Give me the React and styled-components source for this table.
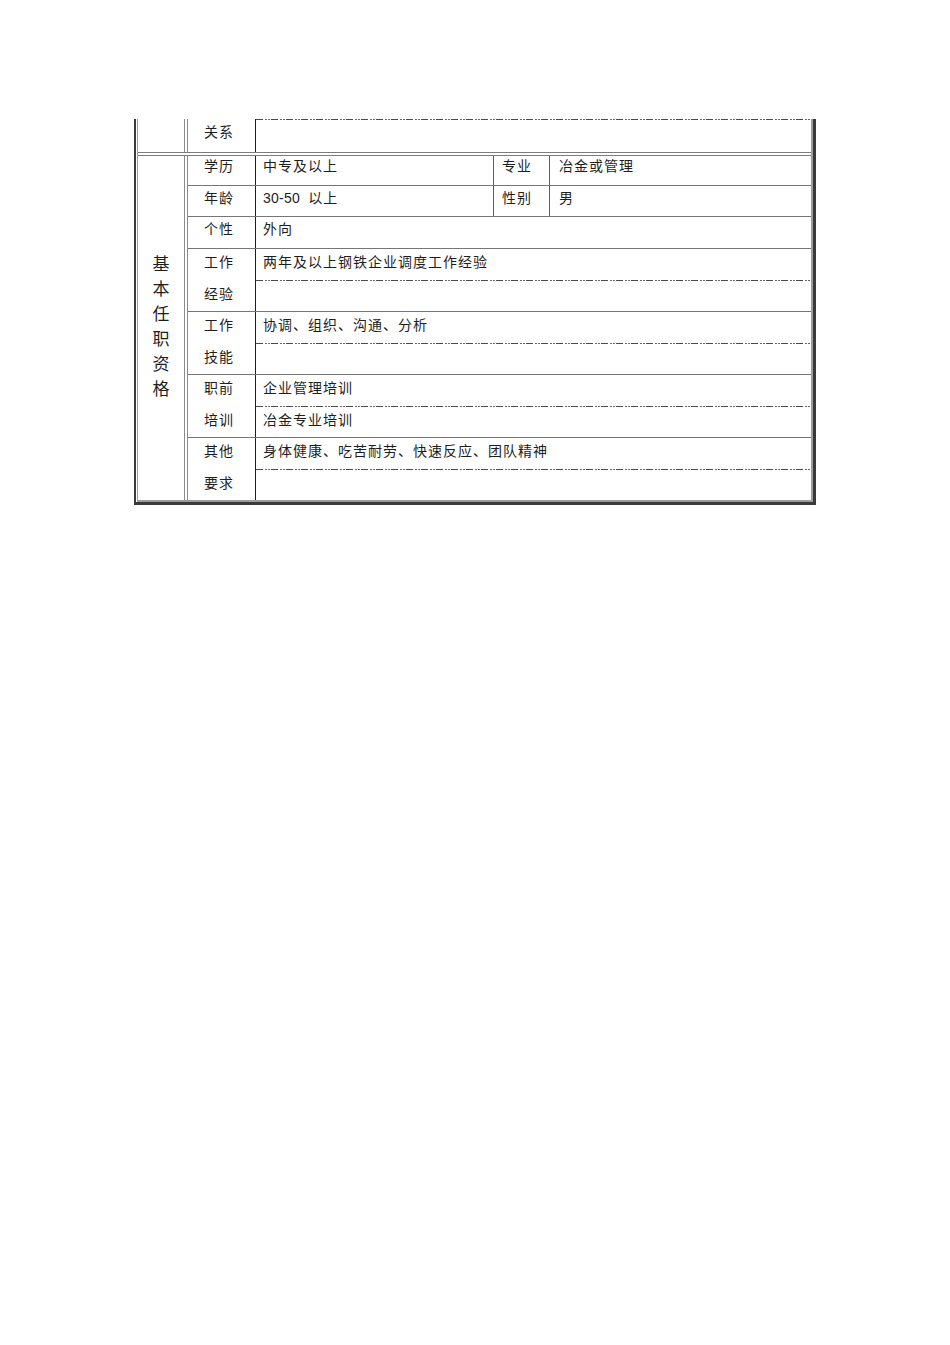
import React from 'react';
import styled, { createGlobalStyle } from 'styled-components';

const Global = createGlobalStyle`
  html, body { margin: 0; padding: 0; background: #fff; }
  body {
    font-family: "Liberation Sans", "Noto Sans CJK SC", sans-serif;
    color: #1e1e1e;
  }
`;

const dashed = `repeating-linear-gradient(to right,
  #4a4a4a 0 7px, transparent 7px 9px, #6a6a6a 9px 11px,
  transparent 11px 12px, #6a6a6a 12px 14px, transparent 14px 15px)`;

const Page = styled.div`
  width: 950px;
  min-height: 1345px;
  box-sizing: border-box;
  padding: 119px 0 0 134px;
`;

const Frame = styled.div`
  width: 682px;
  box-sizing: border-box;
  border-left: 2px solid #3a3a3a;
  border-right: 3px solid #3a3a3a;
  border-bottom: 3px solid #3a3a3a;
  padding-left: 1px;
  background: #fff;
`;

const Inner = styled.div`
  border-left: 1px solid #9c9c9c;
  border-right: 2px solid #9c9c9c;
  border-bottom: 2px solid #9c9c9c;
`;

const TopRow = styled.div`
  display: grid;
  grid-template-columns: 50px 68px 1fr;
  height: 37px;
  box-sizing: border-box;
  border-bottom: 4px double #7c7c7c;
`;

const SideCell = styled.div`
  border-right: 4px double #8c8c8c;
`;

const Body = styled.div`
  display: grid;
  grid-template-columns: 50px 1fr;
`;

const QualCell = styled.div`
  border-right: 4px double #8c8c8c;
  display: flex;
  flex-direction: column;
  align-items: center;
  justify-content: center;
  font-size: 17px;
  line-height: 25px;
  padding-bottom: 2px;
`;

const Groups = styled.div`
  display: flex;
  flex-direction: column;
`;

const Group = styled.div`
  display: grid;
  grid-template-columns: 68px 1fr;
  grid-template-rows: ${p => p.$rows};
  border-bottom: 1px solid #767676;
  &:last-child { border-bottom: none; }
`;

const Label = styled.div`
  border-right: 1px solid #1c1c1c;
  padding: ${p => p.$pt ?? 3}px 0 0 16px;
  font-size: 14px;
  line-height: 20px;
  letter-spacing: 1px;
  white-space: pre;
`;

const Value = styled.div`
  padding: ${p => p.$pt ?? 3}px 0 0 7px;
  font-size: 14px;
  line-height: 20px;
  letter-spacing: 1px;
  white-space: pre;
  background-image: ${p => (p.$dashed ? dashed : 'none')};
  background-repeat: no-repeat;
  background-size: 100% 1px;
  background-position: ${p => (p.$dashed === 'top' ? 'left top' : 'left bottom')};
`;

const PairGrid = styled.div`
  display: grid;
  grid-template-columns: 238px 56px 1fr;
`;

const PairCell = styled.div`
  padding: ${p => p.$pt}px 0 0 ${p => p.$pl}px;
  font-size: 14px;
  line-height: 20px;
  letter-spacing: 1px;
  white-space: pre;
  border-right: ${p => (p.$edge ? '1px solid #5e5e5e' : 'none')};
`;

const Latin = styled.span`
  letter-spacing: 0.25px;
`;

const pairs = [
  { label: '学历', v1: '中专及以上', k2: '专业', v2: '冶金或管理', h: 29, pt: 0 },
  { label: '年龄', v1: <><Latin>{'30-50  '}</Latin>以上</>, k2: '性别', v2: '男', h: 30, pt: 2 },
];

const groups = [
  { labels: ['个性'], values: ['外向'], rows: '31px', pt: 2 },
  { labels: ['工作', '经验'], values: ['两年及以上钢铁企业调度工作经验', ''], rows: '32px 30px' },
  { labels: ['工作', '技能'], values: ['协调、组织、沟通、分析', ''], rows: '32px 30px' },
  { labels: ['职前', '培训'], values: ['企业管理培训', '冶金专业培训'], rows: '32px 30px' },
  { labels: ['其他', '要求'], values: ['身体健康、吃苦耐劳、快速反应、团队精神', ''], rows: '32px 30px' },
];

export default function App() {
  return (
    <Page>
      <Global />
      <Frame>
        <Inner>
          <TopRow>
            <SideCell />
            <Label $pt={3}>关系</Label>
            <Value $dashed="top" $pt={3}></Value>
          </TopRow>
          <Body>
            <QualCell>
              {'基本任职资格'.split('').map((c, i) => (
                <span key={i}>{c}</span>
              ))}
            </QualCell>
            <Groups>
              {pairs.map((p, i) => (
                <Group key={'p' + i} $rows={p.h + 'px'}>
                  <Label $pt={p.pt}>{p.label}</Label>
                  <PairGrid>
                    <PairCell $pt={p.pt} $pl={7} $edge>{p.v1}</PairCell>
                    <PairCell $pt={p.pt} $pl={8} $edge>{p.k2}</PairCell>
                    <PairCell $pt={p.pt} $pl={9}>{p.v2}</PairCell>
                  </PairGrid>
                </Group>
              ))}
              {groups.map((g, i) => (
                <Group key={'g' + i} $rows={g.rows}>
                  {g.labels.map((l, j) => (
                    <React.Fragment key={j}>
                      <Label $pt={g.pt}>{l}</Label>
                      <Value $pt={g.pt} $dashed={j === 0 && g.labels.length > 1 ? 'bottom' : undefined}>
                        {g.values[j]}
                      </Value>
                    </React.Fragment>
                  ))}
                </Group>
              ))}
            </Groups>
          </Body>
        </Inner>
      </Frame>
    </Page>
  );
}
